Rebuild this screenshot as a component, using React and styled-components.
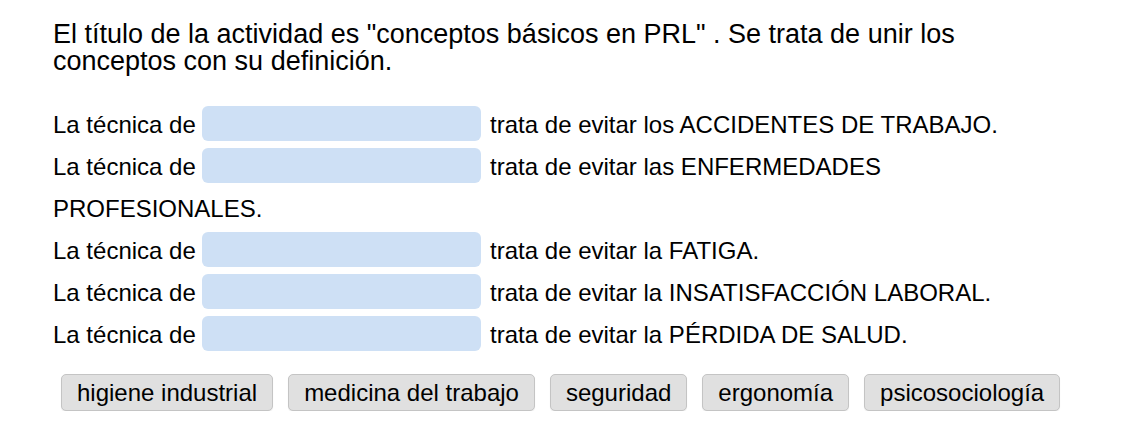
import React from "react";
import styled, { createGlobalStyle } from "styled-components";

const GlobalStyle = createGlobalStyle`
  body {
    margin: 0;
    background: #fff;
    font-family: "Liberation Sans", Arial, sans-serif;
    color: #000;
  }
`;

const frases = [
  "trata de evitar los ACCIDENTES DE TRABAJO.",
  "trata de evitar las ENFERMEDADES PROFESIONALES.",
  "trata de evitar la FATIGA.",
  "trata de evitar la INSATISFACCIÓN LABORAL.",
  "trata de evitar la PÉRDIDA DE SALUD.",
];

const opciones = [
  "higiene industrial",
  "medicina del trabajo",
  "seguridad",
  "ergonomía",
  "psicosociología",
];

function App() {
  return (
    <Page>
      <GlobalStyle />
      <Title>
        El título de la actividad es "conceptos básicos en PRL" . Se trata de
        unir los conceptos con su definición.
      </Title>
      <Sentences>
        {frases.map((frase) => (
          <Sentence key={frase}>
            La técnica de <Blank /> {frase}
          </Sentence>
        ))}
      </Sentences>
      <Options>
        {opciones.map((op) => (
          <Option key={op}>{op}</Option>
        ))}
      </Options>
    </Page>
  );
}

export default App;

const Page = styled.div`
  padding: 21px 52px 0 53px;
`;

const Title = styled.p`
  margin: 0;
  font-size: 27px;
  line-height: 27px;
`;

const Sentences = styled.div`
  margin-top: 29px;
`;

const Sentence = styled.p`
  margin: 0;
  font-size: 24px;
  line-height: 42px;
`;

const Blank = styled.span`
  display: inline-block;
  width: 279px;
  height: 35px;
  margin-right: 2px;
  border-radius: 6px;
  background: #cee0f5;
  vertical-align: -8px;
`;

const Options = styled.div`
  display: flex;
  gap: 15px;
  margin-top: 18px;
  padding-left: 8px;
`;

const Option = styled.div`
  font-size: 24px;
  line-height: 27px;
  padding: 4px 15px;
  border: 1px solid #c4c4c4;
  border-radius: 5px;
  background: #e0e0e0;
  box-shadow: 0 1px 1px rgba(0, 0, 0, 0.08);
`;
